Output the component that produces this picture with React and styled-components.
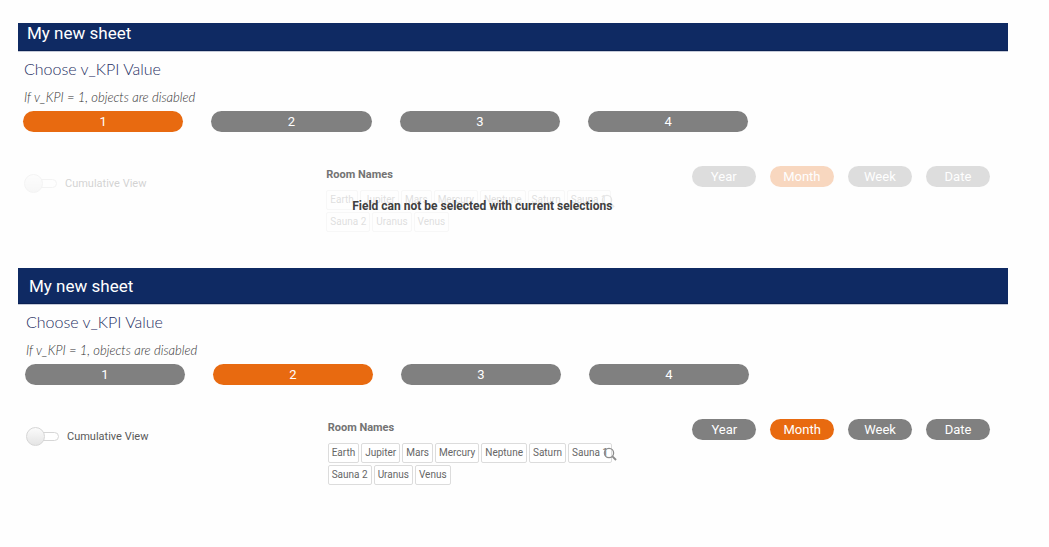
import React, { useState } from "react";
import styled, { createGlobalStyle } from "styled-components";

const GlobalStyle = createGlobalStyle`
  *, *::before, *::after { box-sizing: border-box; }
  body {
    margin: 0;
    background: #fefefe;
    color: #595959;
    font-family: Roboto, "Liberation Sans", sans-serif;
  }
  button, input { font-family: inherit; }
`;

const Page = styled.main`
  padding: 23px 41px 24px 18px;
`;

const SheetHeader = styled.header`
  display: flex;
  align-items: center;
  height: ${(p) => (p.$compact ? 28 : 36)}px;
  padding: ${(p) => (p.$compact ? "0 9px 8px" : "0 11px")};
  background: #0f2a63;
  border-bottom: 1px solid #0a2052;
  box-shadow: 0 1px 0 #c5cad8;
`;

const SheetTitle = styled.h1`
  margin: 0;
  color: #fff;
  font-size: 17px;
  line-height: 20px;
  font-weight: 400;
`;

const SheetBody = styled.div`
  padding: 8px 18px 36px ${(p) => (p.$compact ? 5 : 7)}px;
`;

const KpiTitle = styled.h2`
  margin: 0 0 10px 1px;
  color: #1f2f63;
  font-family: Lato, sans-serif;
  font-size: 16px;
  line-height: 20px;
  font-weight: 300;
`;

const Hint = styled.p`
  margin: 0 0 6px 1px;
  color: #333;
  font-family: Lato, sans-serif;
  font-size: 13px;
  line-height: 16px;
  font-style: italic;
  font-weight: 300;
`;

const KpiButtons = styled.div`
  display: grid;
  grid-template-columns: repeat(4, 1fr);
  gap: 28px;
  width: 75%;
`;

const Pill = styled.button`
  height: 21px;
  padding: 0;
  border: 0;
  border-radius: 11px;
  background: ${(p) => (p.$active ? "#e86a10" : "#808080")};
  color: #fff;
  font-size: 13px;
  line-height: 21px;
  text-align: center;
  opacity: ${(p) => (p.disabled ? 0.26 : 1)};
`;

const Controls = styled.div`
  display: grid;
  grid-template-columns: 303fr 365fr 298fr;
  align-items: start;
  margin-top: 34px;
`;

const ToggleLabel = styled.label`
  display: flex;
  align-items: center;
  gap: 8px;
  height: 34px;
  margin-left: 1px;
  font-size: 11px;
  opacity: ${(p) => (p.$disabled ? 0.26 : 1)};
`;

const Toggle = styled.input`
  appearance: none;
  position: relative;
  flex: none;
  width: 33px;
  height: 19px;
  margin: 0;

  &::before, &::after {
    content: "";
    position: absolute;
    border: 1px solid #d6d6d6;
  }
  &::before {
    inset: 5px 0 5px 8px;
    border-radius: 5px;
    background: #fff;
  }
  &::after {
    top: 0;
    left: ${(p) => (p.checked ? 14 : 0)}px;
    width: 19px;
    height: 19px;
    border-radius: 50%;
    background: linear-gradient(#fbfbfb, #e4e4e4);
  }
`;

const RoomBox = styled.section`
  position: relative;
  width: 312px;
`;

const RoomTitle = styled.h3`
  margin: 0 0 6px;
  color: #737373;
  font-size: 11px;
  line-height: 18px;
  font-weight: 700;
`;

const ChipList = styled.div`
  position: relative;
  display: flex;
  flex-wrap: wrap;
  gap: 2px;
  width: 289px;
  opacity: ${(p) => (p.$disabled ? 0.2 : 1)};
`;

const Chip = styled.button`
  height: 20px;
  padding: 0 3px;
  border: 1px solid #dcdcdc;
  border-radius: 2px;
  background: #fff;
  color: #666;
  font-size: 10px;
  line-height: 18px;
`;

const SearchButton = styled.button`
  position: absolute;
  top: 4px;
  right: 0;
  width: 14px;
  height: 14px;
  padding: 0;
  border: 0;
  background: none;
  color: #8c8c8c;

  svg { display: block; }
`;

const Notice = styled.p`
  position: absolute;
  inset: 32px 0 auto;
  margin: 0;
  color: #404040;
  font-size: 12px;
  line-height: 16px;
  font-weight: 700;
  text-align: center;
  white-space: nowrap;
`;

const PeriodButtons = styled.div`
  display: grid;
  grid-template-columns: repeat(4, 1fr);
  gap: 14px;
`;

const ROOMS = ["Earth", "Jupiter", "Mars", "Mercury", "Neptune", "Saturn", "Sauna 1", "Sauna 2", "Uranus", "Venus"];
const PERIODS = ["Year", "Month", "Week", "Date"];

function SearchIcon() {
  return (
    <svg width="14" height="14" viewBox="0 0 14 14" fill="none" stroke="currentColor" aria-hidden="true">
      <circle cx="6" cy="6" r="4.6" strokeWidth="1.3" />
      <path d="M9.4 9.4 13 13" strokeWidth="1.9" />
    </svg>
  );
}

function Sheet({ initialKpi, compact }) {
  const [kpi, setKpi] = useState(initialKpi);
  const [period, setPeriod] = useState("Month");
  const [cumulative, setCumulative] = useState(false);
  const disabled = kpi === 1;

  return (
    <article>
      <SheetHeader $compact={compact}>
        <SheetTitle>My new sheet</SheetTitle>
      </SheetHeader>
      <SheetBody $compact={compact}>
        <KpiTitle>Choose v_KPI Value</KpiTitle>
        <Hint>If v_KPI = 1, objects are disabled</Hint>
        <KpiButtons>
          {[1, 2, 3, 4].map((n) => (
            <Pill key={n} type="button" $active={n === kpi} aria-pressed={n === kpi} onClick={() => setKpi(n)}>
              {n}
            </Pill>
          ))}
        </KpiButtons>
        <Controls>
          <ToggleLabel $disabled={disabled}>
            <Toggle
              type="checkbox"
              checked={cumulative}
              disabled={disabled}
              onChange={(e) => setCumulative(e.target.checked)}
            />
            Cumulative View
          </ToggleLabel>
          <RoomBox>
            <RoomTitle>Room Names</RoomTitle>
            <ChipList $disabled={disabled}>
              {ROOMS.map((room) => (
                <Chip key={room} type="button" disabled={disabled}>{room}</Chip>
              ))}
              <SearchButton type="button" aria-label="Search" disabled={disabled}>
                <SearchIcon />
              </SearchButton>
            </ChipList>
            {disabled && <Notice>Field can not be selected with current selections</Notice>}
          </RoomBox>
          <PeriodButtons>
            {PERIODS.map((name) => (
              <Pill
                key={name}
                type="button"
                $active={name === period}
                aria-pressed={name === period}
                disabled={disabled}
                onClick={() => setPeriod(name)}
              >
                {name}
              </Pill>
            ))}
          </PeriodButtons>
        </Controls>
      </SheetBody>
    </article>
  );
}

export default function App() {
  return (
    <>
      <GlobalStyle />
      <Page>
        <Sheet initialKpi={1} compact />
        <Sheet initialKpi={2} />
      </Page>
    </>
  );
}
